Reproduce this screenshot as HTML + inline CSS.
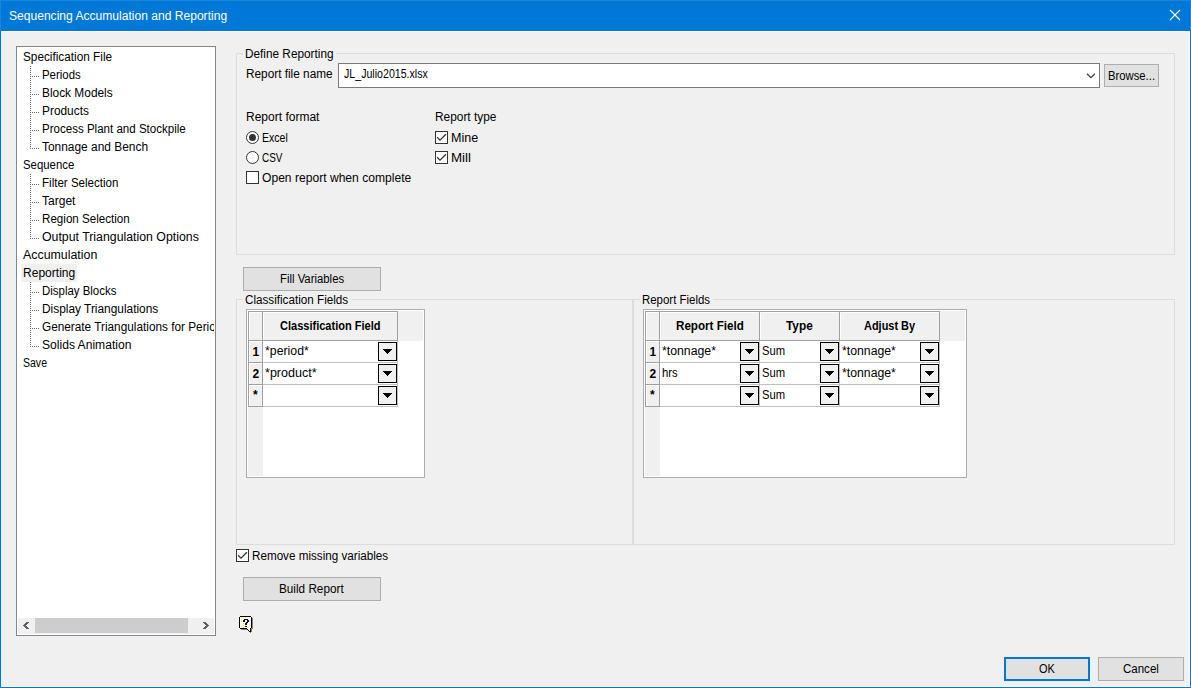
<!DOCTYPE html>
<html><head><meta charset="utf-8"><title>Sequencing Accumulation and Reporting</title>
<style>
html,body{margin:0;padding:0;background:#f0f0f0;}
body{width:1191px;height:688px;position:relative;overflow:hidden;background:#f0f0f0;font-family:"Liberation Sans",sans-serif;font-size:12px;color:#000;}
div,span,svg{position:absolute;box-sizing:border-box;}
.t{white-space:pre;line-height:14px;height:14px;transform-origin:0 0;}
.btn{background:#e1e1e1;border:1px solid #adadad;}
.grp{border:1px solid #dcdcdc;}
.lbl{background:#f0f0f0;height:14px;}
.cb{width:13px;height:13px;background:#fff;border:1px solid #333;}
.rb{width:13px;height:13px;background:#fff;border:1px solid #333;border-radius:50%;}
.grid{background:#fff;border:1px solid #abadb3;}
.dd{width:19px;height:19px;background:#f0f0f0;border:1px solid #000;}
.hl{height:1px;background:#a0a0a0;}
.vl{width:1px;background:#a0a0a0;}
.dv{width:1px;background-image:linear-gradient(#6e6e6e 50%,transparent 50%);background-size:1px 2px;}
.dh{height:1px;background-image:linear-gradient(90deg,#6e6e6e 50%,transparent 50%);background-size:2px 1px;}
</style></head><body>

<div style="left:0;top:0;width:1191px;height:688px;background:#0078d7;"></div>
<div style="left:0;top:0;width:1191px;height:31px;background:#1a86db;"></div>
<div style="left:1px;top:1px;width:1189px;height:30px;background:#0078d7;"></div>
<div style="left:1px;top:31px;width:1189px;height:656px;background:#fdf8f4;"></div>
<div style="left:2px;top:32px;width:1187px;height:654px;background:#f0f0f0;"></div>
<span class="t" style="left:9.13px;top:9px;transform:scaleX(1.0059);color:#fff;">Sequencing Accumulation and Reporting</span>
<svg style="left:1169px;top:9px" width="12" height="12" viewBox="0 0 12 12"><path d="M1 1 L11 11 M11 1 L1 11" stroke="#fff" stroke-width="1.1" fill="none"/></svg>
<div style="left:16px;top:46px;width:200px;height:590px;background:#fff;border:1px solid #828790;overflow:hidden;">
</div>
<div style="left:21px;top:264px;width:56px;height:18px;background:#f0f0f0;"></div>
<span class="t" style="left:22.95px;top:50px;transform:scaleX(0.9818);">Specification File</span>
<span class="t" style="left:42.25px;top:68px;transform:scaleX(0.9514);">Periods</span>
<span class="t" style="left:42.21px;top:86px;transform:scaleX(0.9905);">Block Models</span>
<span class="t" style="left:42.21px;top:104px;transform:scaleX(0.9899);">Products</span>
<span class="t" style="left:42.24px;top:122px;transform:scaleX(0.9622);">Process Plant and Stockpile</span>
<span class="t" style="left:41.99px;top:140px;transform:scaleX(0.9934);">Tonnage and Bench</span>
<span class="t" style="left:22.98px;top:158px;transform:scaleX(0.9477);">Sequence</span>
<span class="t" style="left:42.24px;top:176px;transform:scaleX(0.9629);">Filter Selection</span>
<span class="t" style="left:41.99px;top:194px;transform:scaleX(1.0024);">Target</span>
<span class="t" style="left:42.23px;top:212px;transform:scaleX(0.9674);">Region Selection</span>
<span class="t" style="left:42.05px;top:230px;transform:scaleX(1.0265);">Output Triangulation Options</span>
<span class="t" style="left:23.49px;top:248px;transform:scaleX(1.0320);">Accumulation</span>
<span class="t" style="left:22.70px;top:266px;transform:scaleX(1.0040);">Reporting</span>
<span class="t" style="left:42.25px;top:284px;transform:scaleX(0.9534);">Display Blocks</span>
<span class="t" style="left:42.21px;top:302px;transform:scaleX(0.9905);">Display Triangulations</span>
<span class="t" style="left:42.43px;top:338px;transform:scaleX(1.0076);">Solids Animation</span>
<span class="t" style="left:23.03px;top:356px;transform:scaleX(0.8767);">Save</span>
<div style="left:42px;top:320px;width:172px;height:18px;overflow:hidden;">
<span class="t" style="left:-0.2px;top:0px;transform:scaleX(0.983);">Generate Triangulations for Periods</span>
</div>
<div class="dv" style="left:30px;top:66px;height:83px;"></div>
<div class="dh" style="left:30px;top:76px;width:10px;"></div>
<div class="dh" style="left:30px;top:94px;width:10px;"></div>
<div class="dh" style="left:30px;top:112px;width:10px;"></div>
<div class="dh" style="left:30px;top:130px;width:10px;"></div>
<div class="dh" style="left:30px;top:148px;width:10px;"></div>
<div class="dv" style="left:30px;top:174px;height:65px;"></div>
<div class="dh" style="left:30px;top:184px;width:10px;"></div>
<div class="dh" style="left:30px;top:202px;width:10px;"></div>
<div class="dh" style="left:30px;top:220px;width:10px;"></div>
<div class="dh" style="left:30px;top:238px;width:10px;"></div>
<div class="dv" style="left:30px;top:282px;height:65px;"></div>
<div class="dh" style="left:30px;top:292px;width:10px;"></div>
<div class="dh" style="left:30px;top:310px;width:10px;"></div>
<div class="dh" style="left:30px;top:328px;width:10px;"></div>
<div class="dh" style="left:30px;top:346px;width:10px;"></div>
<div style="left:18px;top:618px;width:196px;height:16px;background:#f0f0f0;"></div>
<div style="left:35px;top:618px;width:153px;height:15px;background:#cdcdcd;"></div>
<svg style="left:23px;top:622px" width="6" height="7" viewBox="0 0 6 7" shape-rendering="crispEdges" fill="#606060"><rect x="3" y="0" width="3" height="1"/><rect x="2" y="1" width="3" height="1"/><rect x="1" y="2" width="3" height="1"/><rect x="0" y="3" width="3" height="1"/><rect x="1" y="4" width="3" height="1"/><rect x="2" y="5" width="3" height="1"/><rect x="3" y="6" width="3" height="1"/></svg>
<svg style="left:203px;top:622px" width="6" height="7" viewBox="0 0 6 7" shape-rendering="crispEdges" fill="#606060"><rect x="0" y="0" width="3" height="1"/><rect x="1" y="1" width="3" height="1"/><rect x="2" y="2" width="3" height="1"/><rect x="3" y="3" width="3" height="1"/><rect x="2" y="4" width="3" height="1"/><rect x="1" y="5" width="3" height="1"/><rect x="0" y="6" width="3" height="1"/></svg>
<div class="grp" style="left:236px;top:53px;width:939px;height:202px;"></div>
<div class="lbl" style="left:243px;top:46px;width:93px;"></div>
<span class="t" style="left:244.92px;top:47px;transform:scaleX(0.9828);">Define Reporting</span>
<span class="t" style="left:246.32px;top:67px;transform:scaleX(0.9836);">Report file name</span>
<div style="left:338px;top:63px;width:762px;height:25px;background:#fff;border:1px solid #7a7a7a;"></div>
<span class="t" style="left:343.97px;top:67px;transform:scaleX(0.8852);">JL_Julio2015.xlsx</span>
<svg style="left:1086px;top:73px" width="11" height="7" viewBox="0 0 11 7"><path d="M1.0 0.7 L4.95 4.65 L8.9 0.7" stroke="#3a3a3a" stroke-width="1.25" fill="none"/></svg>
<div class="btn" style="left:1104px;top:64px;width:55px;height:23px;"></div>
<span class="t" style="left:1108.06px;top:69px;transform:scaleX(0.9401);">Browse...</span>
<span class="t" style="left:246.00px;top:110px;transform:scaleX(1.0010);">Report format</span>
<div class="rb" style="left:246px;top:131px;"></div><div style="left:249px;top:134px;width:7px;height:7px;border-radius:50%;background:#333;"></div>
<span class="t" style="left:262.12px;top:131px;transform:scaleX(0.8789);">Excel</span>
<div class="rb" style="left:246px;top:151px;"></div>
<span class="t" style="left:261.90px;top:151px;transform:scaleX(0.8298);">CSV</span>
<div class="cb" style="left:246px;top:171px;"></div>
<span class="t" style="left:261.86px;top:171px;transform:scaleX(1.0078);">Open report when complete</span>
<span class="t" style="left:434.81px;top:110px;transform:scaleX(0.9897);">Report type</span>
<div class="cb" style="left:435px;top:131px;"></div><svg style="left:435px;top:131px" width="13" height="13" viewBox="0 0 13 13"><path d="M2.1 6.2 L5 9.1 L10.9 3.2" stroke="#333" stroke-width="1.25" fill="none"/></svg>
<span class="t" style="left:450.85px;top:131px;transform:scaleX(1.0481);">Mine</span>
<div class="cb" style="left:435px;top:151px;"></div><svg style="left:435px;top:151px" width="13" height="13" viewBox="0 0 13 13"><path d="M2.1 6.2 L5 9.1 L10.9 3.2" stroke="#333" stroke-width="1.25" fill="none"/></svg>
<span class="t" style="left:450.79px;top:151px;transform:scaleX(1.1111);">Mill</span>
<div class="btn" style="left:243px;top:267px;width:138px;height:24px;"></div>
<span class="t" style="left:279.95px;top:272px;transform:scaleX(0.9456);">Fill Variables</span>
<div class="grp" style="left:236px;top:299px;width:397px;height:246px;"></div>
<div class="lbl" style="left:243px;top:293px;width:108px;"></div>
<span class="t" style="left:244.92px;top:293px;transform:scaleX(0.9726);">Classification Fields</span>
<div class="grp" style="left:633px;top:299px;width:542px;height:246px;"></div>
<div class="lbl" style="left:640px;top:293px;width:73px;"></div>
<span class="t" style="left:642.15px;top:293px;transform:scaleX(0.9533);">Report Fields</span>
<div class="grid" style="left:246px;top:309px;width:179px;height:169px;"></div>
<div style="left:248px;top:311px;width:175px;height:30px;background:#f0f0f0;"></div>
<div style="left:248px;top:311px;width:15px;height:165px;background:#f0f0f0;"></div>
<div style="left:263px;top:341px;width:134px;height:65px;background:#fff;"></div>
<div class="hl" style="left:263px;top:362px;width:135px;background:#c0c0c0;"></div>
<div class="hl" style="left:263px;top:384px;width:135px;background:#c0c0c0;"></div>
<div class="hl" style="left:263px;top:406px;width:135px;background:#c0c0c0;"></div>
<div class="vl" style="left:397px;top:341px;height:66px;background:#c0c0c0;"></div>
<div class="hl" style="left:248px;top:311px;width:150px;"></div>
<div class="vl" style="left:248px;top:311px;height:96px;"></div>
<div class="hl" style="left:248px;top:340px;width:150px;"></div>
<div style="left:249px;top:312px;width:148px;height:1px;background:#fff;"></div>
<div style="left:249px;top:312px;width:1px;height:28px;background:#fff;"></div>
<div class="vl" style="left:262px;top:311px;height:30px;"></div>
<div style="left:263px;top:312px;width:1px;height:28px;background:#fff;"></div>
<div class="vl" style="left:397px;top:311px;height:30px;"></div>
<div class="vl" style="left:262px;top:341px;height:66px;"></div>
<div class="hl" style="left:248px;top:362px;width:15px;"></div>
<div class="hl" style="left:248px;top:384px;width:15px;"></div>
<div class="hl" style="left:248px;top:406px;width:15px;"></div>
<div style="left:249px;top:341px;width:13px;height:1px;background:#fff;"></div>
<div style="left:249px;top:341px;width:1px;height:21px;background:#fff;"></div>
<div style="left:249px;top:363px;width:13px;height:1px;background:#fff;"></div>
<div style="left:249px;top:363px;width:1px;height:21px;background:#fff;"></div>
<div style="left:249px;top:385px;width:13px;height:1px;background:#fff;"></div>
<div style="left:249px;top:385px;width:1px;height:21px;background:#fff;"></div>
<div class="dd" style="left:378px;top:342px;"><svg style="left:4px;top:6px" width="9" height="5" viewBox="0 0 9 5" shape-rendering="crispEdges"><path d="M0 0h9v1h-1v1h-1v1h-1v1h-1v1h-1v-1h-1v-1h-1v-1h-1v-1h-1z" fill="#000"/></svg></div>
<div class="dd" style="left:378px;top:364px;"><svg style="left:4px;top:6px" width="9" height="5" viewBox="0 0 9 5" shape-rendering="crispEdges"><path d="M0 0h9v1h-1v1h-1v1h-1v1h-1v1h-1v-1h-1v-1h-1v-1h-1v-1h-1z" fill="#000"/></svg></div>
<div class="dd" style="left:378px;top:386px;"><svg style="left:4px;top:6px" width="9" height="5" viewBox="0 0 9 5" shape-rendering="crispEdges"><path d="M0 0h9v1h-1v1h-1v1h-1v1h-1v1h-1v-1h-1v-1h-1v-1h-1v-1h-1z" fill="#000"/></svg></div>
<span class="t" style="left:279.78px;top:319px;transform:scaleX(0.9191);font-weight:bold;">Classification Field</span>
<span class="t" style="left:265.12px;top:344px;transform:scaleX(1.0249);">*period*</span>
<span class="t" style="left:265.11px;top:366px;transform:scaleX(1.0468);">*product*</span>
<span class="t" style="left:252.5px;top:345px;font-weight:bold;">1</span>
<span class="t" style="left:252.5px;top:367px;font-weight:bold;">2</span>
<span class="t" style="left:253px;top:388px;font-weight:bold;">*</span>
<div class="grid" style="left:643px;top:309px;width:324px;height:169px;"></div>
<div style="left:645px;top:311px;width:320px;height:30px;background:#f0f0f0;"></div>
<div style="left:645px;top:311px;width:15px;height:165px;background:#f0f0f0;"></div>
<div style="left:660px;top:341px;width:279px;height:65px;background:#fff;"></div>
<div class="hl" style="left:660px;top:362px;width:280px;background:#c0c0c0;"></div>
<div class="hl" style="left:660px;top:384px;width:280px;background:#c0c0c0;"></div>
<div class="hl" style="left:660px;top:406px;width:280px;background:#c0c0c0;"></div>
<div class="vl" style="left:759px;top:341px;height:66px;background:#c0c0c0;"></div>
<div class="vl" style="left:839px;top:341px;height:66px;background:#c0c0c0;"></div>
<div class="vl" style="left:939px;top:341px;height:66px;background:#c0c0c0;"></div>
<div class="hl" style="left:645px;top:311px;width:295px;"></div>
<div class="vl" style="left:645px;top:311px;height:96px;"></div>
<div class="hl" style="left:645px;top:340px;width:295px;"></div>
<div style="left:646px;top:312px;width:293px;height:1px;background:#fff;"></div>
<div style="left:646px;top:312px;width:1px;height:28px;background:#fff;"></div>
<div class="vl" style="left:659px;top:311px;height:30px;"></div>
<div style="left:660px;top:312px;width:1px;height:28px;background:#fff;"></div>
<div class="vl" style="left:759px;top:311px;height:30px;"></div>
<div style="left:760px;top:312px;width:1px;height:28px;background:#fff;"></div>
<div class="vl" style="left:839px;top:311px;height:30px;"></div>
<div style="left:840px;top:312px;width:1px;height:28px;background:#fff;"></div>
<div class="vl" style="left:939px;top:311px;height:30px;"></div>
<div class="vl" style="left:659px;top:341px;height:66px;"></div>
<div class="hl" style="left:645px;top:362px;width:15px;"></div>
<div class="hl" style="left:645px;top:384px;width:15px;"></div>
<div class="hl" style="left:645px;top:406px;width:15px;"></div>
<div style="left:646px;top:341px;width:13px;height:1px;background:#fff;"></div>
<div style="left:646px;top:341px;width:1px;height:21px;background:#fff;"></div>
<div style="left:646px;top:363px;width:13px;height:1px;background:#fff;"></div>
<div style="left:646px;top:363px;width:1px;height:21px;background:#fff;"></div>
<div style="left:646px;top:385px;width:13px;height:1px;background:#fff;"></div>
<div style="left:646px;top:385px;width:1px;height:21px;background:#fff;"></div>
<div class="dd" style="left:740px;top:342px;"><svg style="left:4px;top:6px" width="9" height="5" viewBox="0 0 9 5" shape-rendering="crispEdges"><path d="M0 0h9v1h-1v1h-1v1h-1v1h-1v1h-1v-1h-1v-1h-1v-1h-1v-1h-1z" fill="#000"/></svg></div>
<div class="dd" style="left:740px;top:364px;"><svg style="left:4px;top:6px" width="9" height="5" viewBox="0 0 9 5" shape-rendering="crispEdges"><path d="M0 0h9v1h-1v1h-1v1h-1v1h-1v1h-1v-1h-1v-1h-1v-1h-1v-1h-1z" fill="#000"/></svg></div>
<div class="dd" style="left:740px;top:386px;"><svg style="left:4px;top:6px" width="9" height="5" viewBox="0 0 9 5" shape-rendering="crispEdges"><path d="M0 0h9v1h-1v1h-1v1h-1v1h-1v1h-1v-1h-1v-1h-1v-1h-1v-1h-1z" fill="#000"/></svg></div>
<div class="dd" style="left:820px;top:342px;"><svg style="left:4px;top:6px" width="9" height="5" viewBox="0 0 9 5" shape-rendering="crispEdges"><path d="M0 0h9v1h-1v1h-1v1h-1v1h-1v1h-1v-1h-1v-1h-1v-1h-1v-1h-1z" fill="#000"/></svg></div>
<div class="dd" style="left:820px;top:364px;"><svg style="left:4px;top:6px" width="9" height="5" viewBox="0 0 9 5" shape-rendering="crispEdges"><path d="M0 0h9v1h-1v1h-1v1h-1v1h-1v1h-1v-1h-1v-1h-1v-1h-1v-1h-1z" fill="#000"/></svg></div>
<div class="dd" style="left:820px;top:386px;"><svg style="left:4px;top:6px" width="9" height="5" viewBox="0 0 9 5" shape-rendering="crispEdges"><path d="M0 0h9v1h-1v1h-1v1h-1v1h-1v1h-1v-1h-1v-1h-1v-1h-1v-1h-1z" fill="#000"/></svg></div>
<div class="dd" style="left:920px;top:342px;"><svg style="left:4px;top:6px" width="9" height="5" viewBox="0 0 9 5" shape-rendering="crispEdges"><path d="M0 0h9v1h-1v1h-1v1h-1v1h-1v1h-1v-1h-1v-1h-1v-1h-1v-1h-1z" fill="#000"/></svg></div>
<div class="dd" style="left:920px;top:364px;"><svg style="left:4px;top:6px" width="9" height="5" viewBox="0 0 9 5" shape-rendering="crispEdges"><path d="M0 0h9v1h-1v1h-1v1h-1v1h-1v1h-1v-1h-1v-1h-1v-1h-1v-1h-1z" fill="#000"/></svg></div>
<div class="dd" style="left:920px;top:386px;"><svg style="left:4px;top:6px" width="9" height="5" viewBox="0 0 9 5" shape-rendering="crispEdges"><path d="M0 0h9v1h-1v1h-1v1h-1v1h-1v1h-1v-1h-1v-1h-1v-1h-1v-1h-1z" fill="#000"/></svg></div>
<span class="t" style="left:676.20px;top:319px;transform:scaleX(0.9680);font-weight:bold;">Report Field</span>
<span class="t" style="left:786.02px;top:319px;transform:scaleX(0.9851);font-weight:bold;">Type</span>
<span class="t" style="left:864.33px;top:319px;transform:scaleX(0.9122);font-weight:bold;">Adjust By</span>
<span class="t" style="left:662.22px;top:344px;transform:scaleX(1.0239);">*tonnage*</span>
<span class="t" style="left:842.12px;top:344px;transform:scaleX(1.0220);">*tonnage*</span>
<span class="t" style="left:842.12px;top:366px;transform:scaleX(1.0220);">*tonnage*</span>
<span class="t" style="left:662.09px;top:366px;transform:scaleX(0.9451);">hrs</span>
<span class="t" style="left:761.98px;top:344px;transform:scaleX(0.9355);">Sum</span>
<span class="t" style="left:761.98px;top:366px;transform:scaleX(0.9355);">Sum</span>
<span class="t" style="left:761.98px;top:388px;transform:scaleX(0.9355);">Sum</span>
<span class="t" style="left:649.5px;top:345px;font-weight:bold;">1</span>
<span class="t" style="left:649.5px;top:367px;font-weight:bold;">2</span>
<span class="t" style="left:650px;top:388px;font-weight:bold;">*</span>
<div class="cb" style="left:236px;top:549px;"></div><svg style="left:236px;top:549px" width="13" height="13" viewBox="0 0 13 13"><path d="M2.1 6.2 L5 9.1 L10.9 3.2" stroke="#333" stroke-width="1.25" fill="none"/></svg>
<span class="t" style="left:251.93px;top:549px;transform:scaleX(0.9721);">Remove missing variables</span>
<div class="btn" style="left:243px;top:577px;width:138px;height:24px;"></div>
<span class="t" style="left:278.92px;top:582px;transform:scaleX(0.9790);">Build Report</span>
<svg style="left:238px;top:615px" width="17" height="20" viewBox="0 0 17 20" shape-rendering="crispEdges">
<defs><pattern id="dith" width="4" height="4" patternUnits="userSpaceOnUse"><rect width="4" height="4" fill="#fff"/><rect x="1" y="0" width="1" height="1" fill="#ff0"/><rect x="3" y="2" width="1" height="1" fill="#ff0"/><rect x="1" y="2" width="1" height="1" fill="#ffffa0"/><rect x="3" y="0" width="1" height="1" fill="#ffffa0"/></pattern></defs>
<path d="M3 2 H14 V3 H15 V14 H14 V17 H13 V18 H12 V17 H11 V16 H10 V15 H3 V14 H2 V3 H3 Z" fill="#808080"/>
<path d="M2 1 H13 V2 H14 V13 H13 V17 H11 V16 H10 V15 H9 V14 H2 V13 H1 V2 H2 Z" fill="#000"/>
<path d="M2 2 H13 V13 H2 Z" fill="url(#dith)"/>
<rect x="9" y="13" width="3" height="1" fill="url(#dith)"/><rect x="10" y="14" width="2" height="1" fill="#ffffa0"/><rect x="11" y="15" width="1" height="1" fill="#fff"/>
<g fill="#000080"><rect x="6" y="4" width="4" height="1"/><rect x="5" y="5" width="2" height="2"/><rect x="9" y="5" width="2" height="2"/><rect x="8" y="7" width="2" height="1"/><rect x="7" y="8" width="2" height="2"/><rect x="7" y="11" width="2" height="1"/></g>
</svg>
<div class="btn" style="left:1004px;top:657px;width:86px;height:24px;border:2px solid #0078d7;"></div>
<span class="t" style="left:1039.11px;top:662px;transform:scaleX(0.9128);">OK</span>
<div class="btn" style="left:1098px;top:657px;width:86px;height:24px;"></div>
<span class="t" style="left:1123.03px;top:662px;transform:scaleX(0.9596);">Cancel</span>
</body></html>
